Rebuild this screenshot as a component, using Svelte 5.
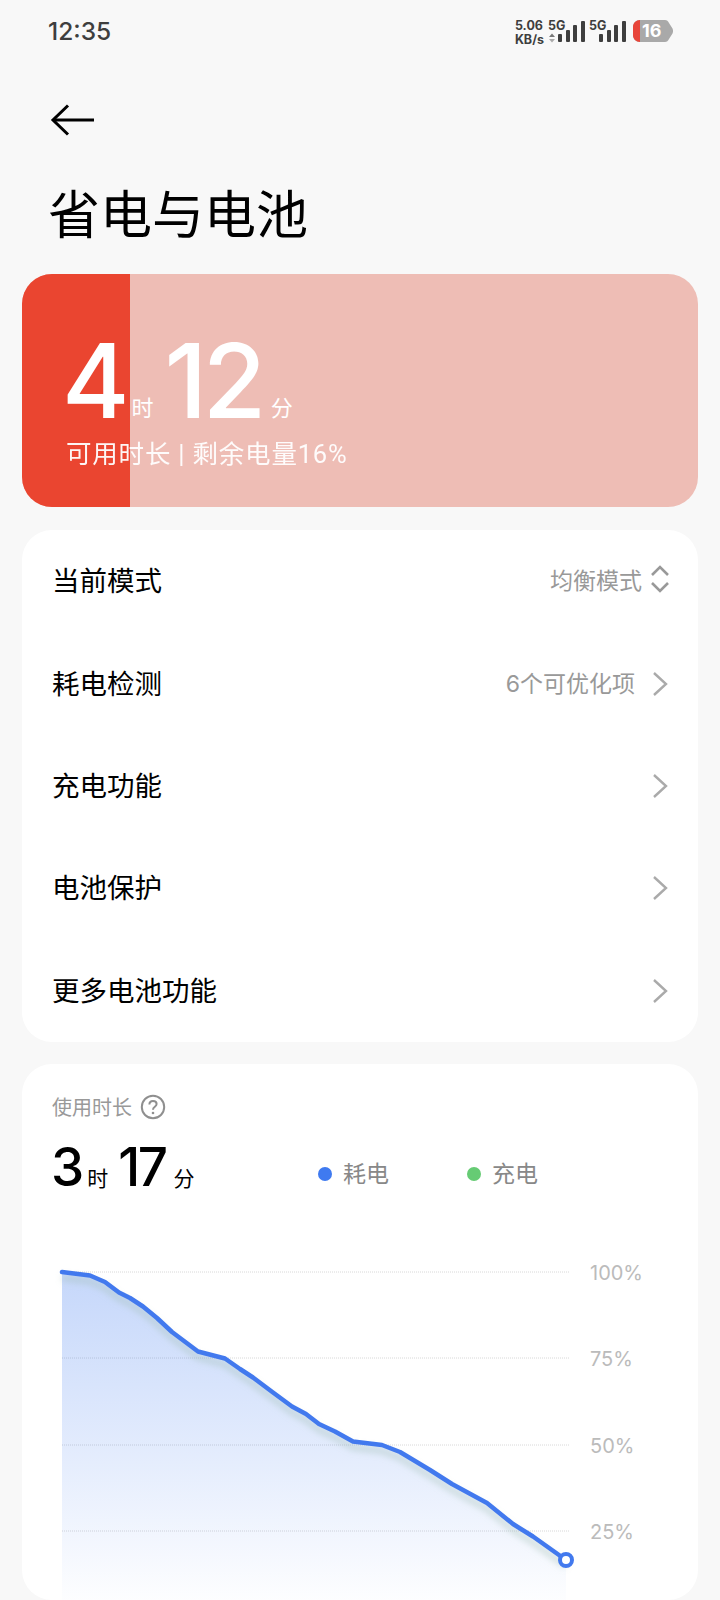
<script>
  const level = 16;

  const rows = [
    { label: '当前模式', value: '均衡模式', icon: 'updown' },
    { label: '耗电检测', value: '6个可优化项', icon: 'right' },
    { label: '充电功能', value: '', icon: 'right' },
    { label: '电池保护', value: '', icon: 'right' },
    { label: '更多电池功能', value: '', icon: 'right' }
  ];

  // chart coordinates are page coordinates, see the viewBox below
  const points = [
    [62, 1272], [90, 1275.5], [105, 1282], [119, 1292.5], [130, 1298], [143, 1306.5],
    [157, 1318], [172, 1332], [198, 1351.5], [225, 1358.5], [240, 1369], [253, 1377.5],
    [273, 1392.5], [292, 1406.5], [306, 1414], [319, 1424], [335, 1431.5], [353, 1441.5],
    [382, 1445], [400, 1452], [430, 1470], [452, 1484], [487, 1503], [513, 1524],
    [533, 1536.5], [566, 1560]
  ];
  const line = points.map((p) => p.join(',')).join(' ');
  const area = `62,1600 ${line} 566,1600`;

  const grid = [
    { y: 1272, label: '100%' },
    { y: 1358, label: '75%' },
    { y: 1445, label: '50%' },
    { y: 1531, label: '25%' }
  ];
</script>

<div class="page">
  <div class="status">
    <span class="time">12:35</span>
    <div class="status-icons">
      <div class="speed"><span>5.06</span><span>KB/s</span></div>
      <div class="sim">
        <span class="net">5G</span>
        <svg class="updown-mini" width="8" height="10" viewBox="0 0 8 10">
          <path d="M4 0.5 7 4H1z" fill="#777" />
          <path d="M4 9.5 1 6h6z" fill="#aaa" />
        </svg>
        <svg class="bars" width="28" height="21" viewBox="0 0 28 21">
          <rect x="0" y="13" width="4" height="8" rx="1" />
          <rect x="8" y="9" width="4" height="12" rx="1" />
          <rect x="15" y="4" width="4" height="17" rx="1" />
          <rect x="23" y="0" width="4" height="21" rx="1" />
        </svg>
      </div>
      <div class="sim second">
        <span class="net">5G</span>
        <svg class="bars" width="28" height="21" viewBox="0 0 28 21">
          <rect x="0" y="13" width="4" height="8" rx="1" />
          <rect x="8" y="9" width="4" height="12" rx="1" />
          <rect x="15" y="4" width="4" height="17" rx="1" />
          <rect x="23" y="0" width="4" height="21" rx="1" />
        </svg>
      </div>
      <div class="battery">
        <svg width="40" height="22" viewBox="0 0 40 22">
          <path d="M7 0H32C34 0 35 1 36 3L39.5 8.5C40.2 10 40.2 12 39.5 13.5L36 19C35 21 34 22 32 22H7C3 22 0 19 0 15V7C0 3 3 0 7 0Z" fill="#a9a9a9" />
          <path d="M7 0V22C3 22 0 19 0 15V7C0 3 3 0 7 0Z" fill="#e8453a" />
        </svg>
        <span class="battery-num">{level}</span>
      </div>
    </div>
  </div>

  <div class="nav">
    <svg width="46" height="32" viewBox="0 0 46 32" fill="none" stroke="#000" stroke-width="3">
      <path d="M44 16H3" />
      <path d="M18 1.5 3 16l15 14.5" />
    </svg>
  </div>

  <h1 class="title">省电与电池</h1>

  <div class="hero">
    <div class="hero-fill" style="width: {level}%"></div>
    <div class="hero-time">
      <span class="big">4</span><span class="unit near">时</span><span class="big second-num">12</span><span class="unit">分</span>
    </div>
    <div class="hero-sub">可用时长 | 剩余电量{level}%</div>
  </div>

  <div class="card list">
    {#each rows as row}
      <div class="row">
        <span class="row-label">{row.label}</span>
        {#if row.value}
          <span class="row-value">{row.value}</span>
        {/if}
        {#if row.icon === 'updown'}
          <svg class="icon-updown" width="20" height="30" viewBox="0 0 20 30" fill="none" stroke="#999" stroke-width="2.6">
            <path d="M2 11 10 3l8 8" />
            <path d="M2 19l8 8 8-8" />
          </svg>
        {:else}
          <svg class="icon-right" width="16" height="26" viewBox="0 0 16 26" fill="none" stroke="#aaa" stroke-width="2.4">
            <path d="M2 2l12 11L2 24" />
          </svg>
        {/if}
      </div>
    {/each}
  </div>

  <div class="card usage">
    <div class="usage-head">
      <span>使用时长</span>
      <svg width="26" height="26" viewBox="0 0 26 26" fill="none">
        <circle cx="13" cy="13" r="11.2" stroke="#8f8f8f" stroke-width="2" />
        <path d="M9.4 10.4c0-2.2 1.6-3.5 3.6-3.5s3.6 1.3 3.6 3.2c0 2.7-3.6 2.7-3.6 5.6" stroke="#8f8f8f" stroke-width="2" />
        <circle cx="13" cy="19" r="1.3" fill="#8f8f8f" />
      </svg>
    </div>
    <div class="usage-line">
      <div class="usage-time">
        <span class="mid">3</span><span class="unit-dark near">时</span><span class="mid second-mid">17</span><span class="unit-dark">分</span>
      </div>
      <div class="legend">
        <span class="dot blue"></span><span class="legend-label">耗电</span>
      </div>
      <div class="legend">
        <span class="dot green"></span><span class="legend-label">充电</span>
      </div>
    </div>

    <svg class="chart" width="676" height="360" viewBox="22 1240 676 360">
      <defs>
        <linearGradient id="fill" x1="0" y1="1272" x2="0" y2="1600" gradientUnits="userSpaceOnUse">
          <stop offset="0" stop-color="#3f7af0" stop-opacity="0.3" />
          <stop offset="0.6" stop-color="#3f7af0" stop-opacity="0.13" />
          <stop offset="1" stop-color="#3f7af0" stop-opacity="0.01" />
        </linearGradient>
        <filter id="soft" x="-5%" y="-5%" width="110%" height="110%">
          <feGaussianBlur stdDeviation="3" />
        </filter>
      </defs>
      {#each grid as g}
        <line class="grid" x1="62" x2="570" y1={g.y} y2={g.y} />
        <text class="axis" x="590" y={g.y + 8}>{g.label}</text>
      {/each}
      <polygon points={area} fill="url(#fill)" />
      <polyline points={line} transform="translate(0 6)" fill="none" stroke="#9dbcb0" stroke-opacity="0.4" stroke-width="6" filter="url(#soft)" />
      <polyline points={line} fill="none" stroke="#4279ee" stroke-width="4.5" stroke-linejoin="round" stroke-linecap="round" />
      <circle cx="566" cy="1560" r="6" fill="#fff" stroke="#4279ee" stroke-width="4" />
    </svg>
  </div>
</div>

<style>
  :global(body) {
    margin: 0;
    background: #f8f8f8;
  }

  .page {
    width: 720px;
    height: 1600px;
    overflow: hidden;
    background: #f8f8f8;
    font-family: Inter, "Noto Sans CJK SC", sans-serif;
    color: #000;
  }

  .status {
    height: 62px;
    padding: 0 47px 0 48px;
    display: flex;
    align-items: center;
    justify-content: space-between;
  }

  .time {
    font-size: 24.5px;
    font-weight: 500;
    color: #3e3e3e;
  }

  .status-icons {
    display: flex;
    align-items: flex-start;
    height: 24px;
    margin-top: -1px;
  }

  .speed {
    display: flex;
    flex-direction: column;
    align-items: flex-start;
    font-size: 12.5px;
    font-weight: 700;
    line-height: 14px;
    color: #3e3e3e;
    margin-right: 4px;
  }

  .sim {
    position: relative;
    width: 37px;
    height: 24px;
  }

  .sim.second {
    width: 42px;
    margin-left: 4px;
  }

  .net {
    position: absolute;
    left: 0;
    top: 0;
    font-size: 12.5px;
    font-weight: 700;
    line-height: 14px;
    color: #3e3e3e;
  }

  .updown-mini {
    position: absolute;
    left: 0;
    top: 14px;
  }

  .bars {
    position: absolute;
    left: 10px;
    top: 2px;
    fill: #3e3e3e;
  }

  .battery {
    position: relative;
    width: 40px;
    height: 22px;
    margin-left: 2px;
    margin-top: 1px;
  }

  .battery svg {
    display: block;
  }

  .battery-num {
    position: absolute;
    left: 9px;
    top: 0;
    font-size: 18px;
    font-weight: 700;
    line-height: 22px;
    color: #fff;
  }

  .nav {
    height: 60px;
    margin-top: 28px;
    padding-left: 50px;
    display: flex;
    align-items: center;
  }

  .title {
    margin: 34px 0 0 48px;
    font-size: 52px;
    font-weight: 400;
    line-height: 64px;
    height: 61px;
  }

  .hero {
    position: relative;
    overflow: hidden;
    margin: 29px 22px 0;
    height: 233px;
    box-sizing: border-box;
    padding: 55px 0 0 40px;
    border-radius: 30px;
    background: #eebdb5;
    color: #fff;
  }

  .hero-fill {
    position: absolute;
    left: 0;
    top: 0;
    bottom: 0;
    background: #ea4530;
  }

  .hero-time,
  .hero-sub {
    position: relative;
  }

  .hero-time {
    display: flex;
    align-items: baseline;
    height: 104px;
  }

  .big {
    font-size: 103px;
    font-weight: 550;
    line-height: 104px;
  }

  .second-num {
    margin-left: 11px;
    letter-spacing: -4.5px;
  }

  .unit {
    font-size: 22px;
    margin-left: 9px;
    transform: translateY(-2px);
  }

  .unit.near {
    margin-left: 2px;
  }

  .hero-sub {
    margin-top: 3px;
    margin-left: 4px;
    font-family: Roboto, "Noto Sans CJK SC", sans-serif;
    font-size: 25.5px;
    letter-spacing: 0.8px;
    line-height: 36px;
    opacity: 0.95;
  }

  .card {
    margin: 22px 22px 0;
    border-radius: 30px;
    background: #fff;
  }

  .list {
    margin-top: 23px;
  }

  .row {
    height: 102.4px;
    box-sizing: border-box;
    padding: 0 30px 4px 30px;
    display: flex;
    align-items: center;
  }

  .row-label {
    font-size: 27.5px;
    flex: 1;
  }

  .row-value {
    font-size: 23px;
    color: #999;
  }

  .icon-updown {
    margin-left: 8px;
    margin-right: -2px;
  }

  .icon-right {
    margin-left: 17px;
    margin-top: 4px;
  }

  .usage {
    position: relative;
    height: 536px;
    padding: 28px 0 0 30px;
    box-sizing: border-box;
  }

  .usage-head {
    display: flex;
    align-items: center;
    gap: 8px;
    height: 30px;
    font-size: 20px;
    color: #999;
  }

  .usage-line {
    display: flex;
    align-items: center;
    margin-top: 12px;
    height: 66px;
  }

  .usage-time {
    width: 267px;
    display: flex;
    align-items: baseline;
    margin-left: -1px;
  }

  .mid {
    font-size: 53px;
    font-weight: 500;
    line-height: 66px;
  }

  .second-mid {
    margin-left: 10px;
    letter-spacing: -2.5px;
  }

  .unit-dark {
    font-size: 21px;
    margin-left: 8px;
  }

  .unit-dark.near {
    margin-left: 3px;
  }

  .legend {
    display: flex;
    align-items: center;
    gap: 11px;
    width: 149px;
    padding-top: 14px;
  }

  .dot {
    width: 14px;
    height: 14px;
    border-radius: 50%;
  }

  .blue {
    background: #3f7af0;
  }

  .green {
    background: #66cb74;
  }

  .legend-label {
    font-size: 23px;
    color: #888;
    margin-bottom: 4px;
  }

  .chart {
    position: absolute;
    left: 0;
    top: 176px;
  }

  .grid {
    stroke: #d8d8d8;
    stroke-width: 1;
    stroke-dasharray: 1 1;
  }

  .axis {
    font-size: 20px;
    fill: #bbb;
  }
</style>
